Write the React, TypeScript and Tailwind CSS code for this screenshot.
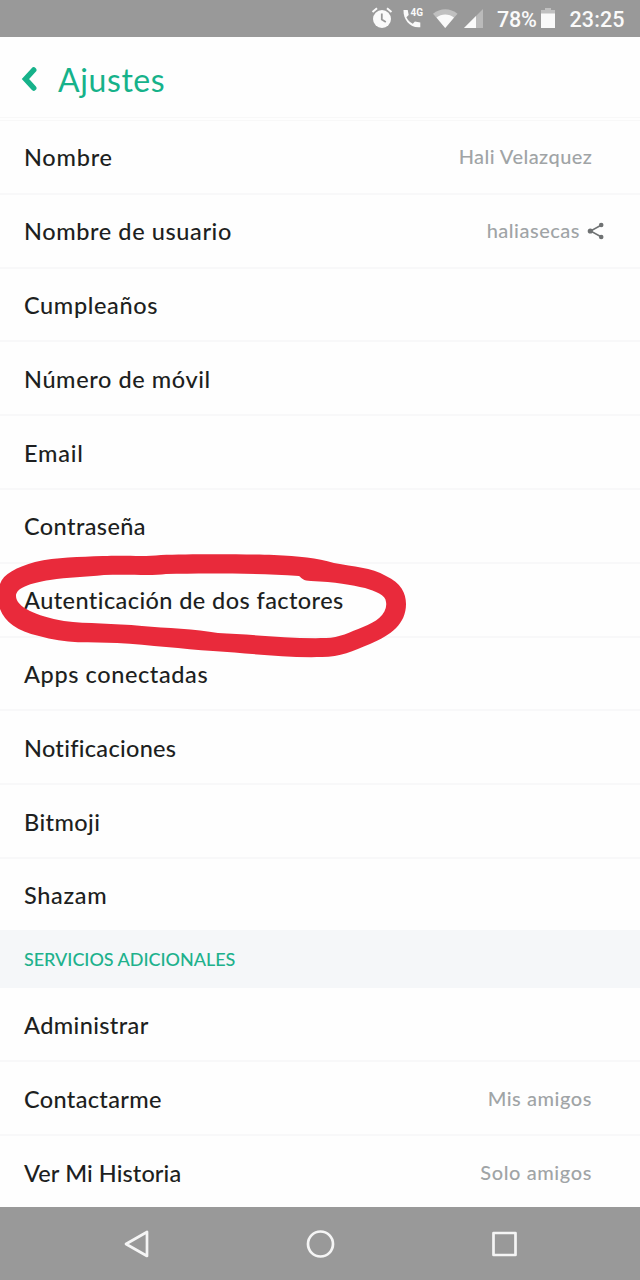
import React from "react";

type Item = { label: string; spacing: string; height: string; value?: string; valueSpacing?: string; share?: boolean };

const account: Item[] = [
  { label: "Nombre", spacing: "tracking-[0.75px]", height: "h-[73.8px]", value: "Hali Velazquez", valueSpacing: "tracking-[0.45px] -mr-[0.4px]" },
  { label: "Nombre de usuario", spacing: "tracking-[0.6px]", height: "h-[73.8px]", value: "haliasecas", valueSpacing: "tracking-[0.5px]", share: true },
  { label: "Cumpleaños", spacing: "tracking-[0.62px]", height: "h-[73.8px]" },
  { label: "Número de móvil", spacing: "tracking-[0.6px]", height: "h-[73.8px]" },
  { label: "Email", spacing: "tracking-[0.75px]", height: "h-[73.8px]" },
  { label: "Contraseña", spacing: "tracking-[0.4px]", height: "h-[73.8px]" },
  { label: "Autenticación de dos factores", spacing: "tracking-[0.42px]", height: "h-[73.8px]" },
  { label: "Apps conectadas", spacing: "tracking-[0.6px]", height: "h-[73.8px]" },
  { label: "Notificaciones", spacing: "tracking-[0.3px]", height: "h-[73.8px]" },
  { label: "Bitmoji", spacing: "tracking-[0.4px]", height: "h-[73.8px]" },
  { label: "Shazam", spacing: "tracking-[0.65px]", height: "h-[71.5px]" },
];

const services: Item[] = [
  { label: "Administrar", spacing: "tracking-[0.38px]", height: "h-[74.5px]" },
  { label: "Contactarme", spacing: "tracking-[0.35px]", height: "h-[73.8px]", value: "Mis amigos", valueSpacing: "tracking-[0.55px]" },
  { label: "Ver Mi Historia", spacing: "tracking-[0.1px]", height: "h-[72.5px]", value: "Solo amigos", valueSpacing: "tracking-[0.6px]" },
];

function ShareIcon() {
  return (
    <svg width="18" height="18" viewBox="0 0 18 18" className="ml-[7px]" fill="#6f7273">
      <path d="M14.500 3 3.500 9l11 6" fill="none" stroke="#6f7273" strokeWidth="1.500" />
      <circle cx="14.200" cy="3" r="2.300" />
      <circle cx="3.300" cy="9" r="2.600" />
      <circle cx="14.200" cy="15" r="2.300" />
    </svg>
  );
}

function Row({ item, last }: { item: Item; last: boolean }) {
  return (
    <div className={`flex shrink-0 items-center justify-between pl-6 ${item.height} ${item.share ? "pr-[35px]" : "pr-12"} ${last ? "" : "border-b-2 border-[#f8f8f9]"}`}>
      <span className={`whitespace-nowrap pt-px text-[23.5px] font-medium leading-7 text-[#1d1f21] ${item.spacing}`}>{item.label}</span>
      {item.value && (
        <span className="flex items-center text-[20px] font-medium leading-6 text-[#a0a4a6]">
          <span className={`whitespace-nowrap pb-px ${item.valueSpacing ?? ""}`}>{item.value}</span>
          {item.share && <ShareIcon />}
        </span>
      )}
    </div>
  );
}

function StatusBar() {
  return (
    <div className="flex h-[37px] shrink-0 items-center bg-[#999999] pl-[371px] font-[Roboto,sans-serif] text-[21.5px] font-medium text-[#fafafa]">
      <svg width="132" height="37" viewBox="0 0 132 37" className="-mr-[6px] shrink-0" fill="#fafafa">
        <circle cx="11" cy="19" r="9" />
        <path d="M1.500 12 6 8.300M20.500 12 16 8.300" stroke="#fafafa" strokeWidth="2" fill="none" />
        <path d="M10.800 13.500v6l4 2.500" stroke="#999" strokeWidth="1.800" fill="none" />
        <path d="M32.500 10h4.200l1 5-2.300 2.300c1.700 3.200 3.500 5 6.400 6.400l2.100-2.300 5.400 1v4.800c-9.800 1.200-17.200-7.200-16.800-17.200Z" />
        <text x="39.500" y="16" fontSize="10" fontWeight="700">4G</text>
        <path d="M62 13.800c7-6.200 17.500-6.200 24.500 0L74.200 28Z" opacity=".4" />
        <path d="M65.500 17.500c5-4 12.500-4 17.500 0L74.200 28Z" />
        <path d="M93 28 112 9v19Z" opacity=".35" />
        <path d="M93 28 105 16v12Z" />
      </svg>
      <span className="w-[44px] shrink-0 whitespace-nowrap pt-[2px] leading-none tracking-[-0.2px]">78%</span>
      <svg width="14" height="37" viewBox="0 0 14 37" className="shrink-0" fill="#fafafa">
        <path d="M0 10h4V8h6v2h4v4H0Z" opacity=".4" />
        <path d="M0 13.500h14V28H0Z" />
      </svg>
      <span className="pl-[14.500px] pt-[2px] leading-none tracking-[0.1px]">23:25</span>
    </div>
  );
}

export default function App() {
  return (
    <div className="relative flex h-[1280px] w-[640px] flex-col overflow-hidden bg-[#fefefe] font-[Lato,sans-serif]">
      <StatusBar />
      <header className="flex h-[84px] shrink-0 items-center border-b-4 border-double border-[#f8f8f8] pl-[21px]">
        <svg width="17" height="26" viewBox="0 0 17 26" className="mt-[3px]">
          <path d="M12.700 4 4.500 13l8.200 9" fill="none" stroke="#16b28a" strokeWidth="5.500" strokeLinecap="round" strokeLinejoin="miter" />
        </svg>
        <h1 className="pl-5 pt-[5px] text-[32px] leading-10 tracking-[0.6px] text-[#16b28a]">Ajustes</h1>
      </header>
      <main className="flex h-[1086px] shrink-0 flex-col overflow-hidden">
        {account.map((item, i) => <Row key={item.label} item={item} last={i === account.length - 1} />)}
        <h2 className="flex h-[57.500px] shrink-0 items-center bg-[#f5f7f9] pl-6 pt-px text-[18px] font-medium tracking-[-0.03px] text-[#20b18c]">SERVICIOS ADICIONALES</h2>
        {services.map((item, i) => <Row key={item.label} item={item} last={i === services.length - 1} />)}
      </main>
      <nav className="flex h-[73px] shrink-0 items-center justify-between bg-[#999999] pl-[123px] pr-[122px]">
        <svg width="28" height="30" viewBox="0 0 28 30" fill="none" stroke="#f5f5f5" strokeWidth="2.700" strokeLinejoin="round">
          <path d="M24 3v24L3 15Z" />
        </svg>
        <svg width="30" height="30" viewBox="0 0 30 30" fill="none" stroke="#f5f5f5" strokeWidth="2.700">
          <circle cx="14.500" cy="15" r="12.500" />
        </svg>
        <svg width="27" height="27" viewBox="0 0 27 27" fill="none" stroke="#f5f5f5" strokeWidth="2.700" strokeLinejoin="round">
          <path d="M2.500 3h22v22h-22Z" />
        </svg>
      </nav>
      <svg className="pointer-events-none absolute left-0 top-[540px]" width="420" height="130" viewBox="0 0 420 130">
        <path fillRule="evenodd" fill="#e92a3b" d="M0 44C3 34 17 27 35 22C57 17 79 17 103 16C128 15 142 17 161 15C188 14 241 14 274 15C299 16 317 18 334 23C354 27 371 27 386 36C401 43 406 53 406 64C406 84 391 95 370 104C353 111 340 117 322 117C282 118 248 113 213 111C182 109 151 105 117 103C91 102 65 104 39 96C17 91 5 82 0 69ZM16 56C16 48 30 43 50 40C68 37 85 37 104 35C130 34 151 36 166 34C203 33 249 33 299 36C302 38 303 41 311 41C335 42 352 45 365 48C375 51 386 55 386 62C388 73 377 82 363 87C350 92 339 98 326 98C288 99 249 94 218 93C196 89 166 88 142 86C113 83 88 84 64 81C36 76 16 67 16 56Z" />
      </svg>
    </div>
  );
}
